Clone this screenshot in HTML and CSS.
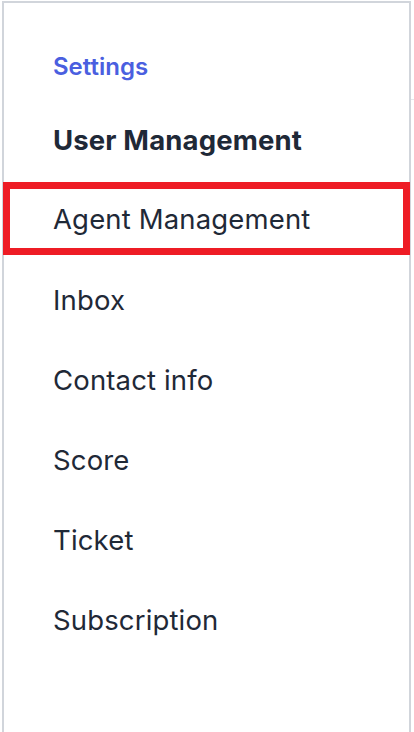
FILE: index.html
```html
<!DOCTYPE html>
<html lang="en">
<head>
    <meta charset="UTF-8">
    <meta name="viewport" content="width=device-width, initial-scale=1.0">
    <title>Settings</title>
    <link rel="stylesheet" href="styles.css">
</head>
<body>
    <div class="layout">
        <aside class="sidebar">
            <h2 class="sidebar-title">Settings</h2>
            <ul class="menu">
                <li class="menu-item active">User Management</li>
                <li class="menu-item highlighted">Agent Management</li>
                <li class="menu-item">Inbox</li>
                <li class="menu-item">Contact info</li>
                <li class="menu-item">Score</li>
                <li class="menu-item">Ticket</li>
                <li class="menu-item">Subscription</li>
            </ul>
        </aside>
        <main class="content">
            <div class="content-header"></div>
        </main>
    </div>
</body>
</html>
```

FILE: styles.css
```css
body {
    margin: 0;
    padding: 0;
    font-family: Inter, "Noto Sans", sans-serif;
    color: #1f2937;
    background: #fff;
    overflow: hidden;
}

.layout {
    display: flex;
    height: 732px;
    padding-top: 1px;
    padding-left: 2px;
    box-sizing: border-box;
}

.sidebar {
    width: 409px;
    flex-shrink: 0;
    box-sizing: border-box;
    border-top: 2px solid #d1d5db;
    border-left: 2px solid #d1d5db;
    border-right: 2px solid #d1d5db;
    padding-top: 49px;
}

.sidebar-title {
    margin: 0 0 0 49px;
    font-size: 24px;
    font-weight: 600;
    color: #4a5fe0;
    line-height: 30px;
}

.menu {
    list-style: none;
    margin: 0;
    padding: 18px 0 0 0;
}

.menu-item {
    height: 80px;
    line-height: 80px;
    padding-left: 49px;
    font-size: 27.5px;
    letter-spacing: 0.15px;
    box-sizing: border-box;
}

.menu-item.active {
    font-weight: 700;
}

.menu-item.highlighted {
    margin: 2px -1px 5px -1px;
    border: 7px solid #ee1c25;
    height: 73px;
    padding-top: 2px;
    line-height: 57px;
    padding-left: 43px;
}

.content {
    flex: 1;
}

.content-header {
    height: 98px;
    border-bottom: 1px solid #e5e7eb;
}
```
